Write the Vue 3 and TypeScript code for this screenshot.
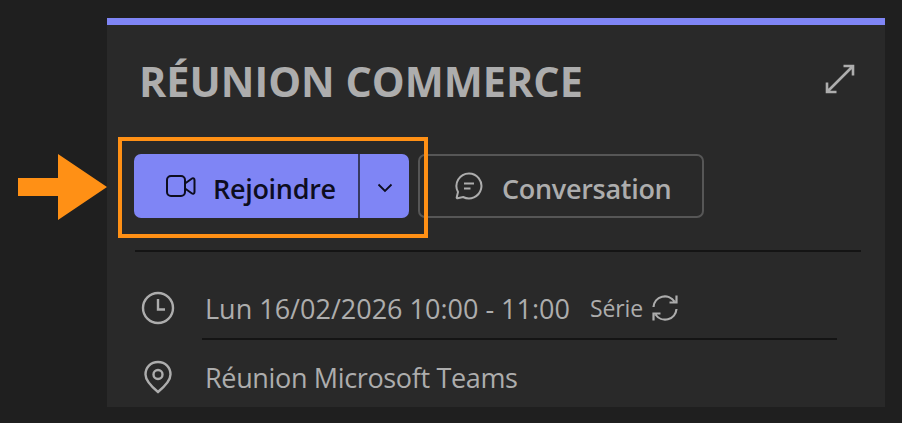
<script setup lang="ts">
const title: string = 'RÉUNION COMMERCE'
</script>

<template>
  <div class="page">
    <section class="card">
      <header class="head">
        <h1 class="title">{{ title }}</h1>
        <svg class="expand" viewBox="0 0 32 32" fill="none" stroke="currentColor" stroke-width="2.6">
          <path d="M3 29 29 3M19.500 3H29V12.500M3 19.500V29H12.500" />
        </svg>
      </header>

      <div class="actions">
        <div class="join">
          <button class="join-main">
            <svg class="cam" viewBox="0 0 30 24" fill="none" stroke="currentColor" stroke-width="2">
              <rect x="1" y="2" width="18" height="20" rx="4" />
              <path d="M19 9.5 26 4.5C27 3.8 28.5 4.5 28.5 6V18C28.5 19.5 27 20.2 26 19.5L19 14.5" />
            </svg>
            <span>Rejoindre</span>
          </button>
          <button class="join-more" aria-label="Options">
            <svg viewBox="0 0 16 10" fill="none" stroke="currentColor" stroke-width="1.8">
              <path d="M1.5 1.5 8 8 14.5 1.5" />
            </svg>
          </button>
        </div>
        <button class="chat">
          <svg class="chat-icon" viewBox="0 0 28 28" fill="none" stroke="currentColor" stroke-width="2">
            <path d="M14 1.5A12.5 12.5 0 1 1 8 25L2.6 26.3C2 26.4 1.6 26 1.7 25.4L3 20A12.5 12.5 0 0 1 14 1.5Z" />
            <path d="M9 11.5H19M9 16.5H15.5" />
          </svg>
          <span>Conversation</span>
        </button>
      </div>

      <hr class="rule rule-main" />

      <div class="row row-date">
        <svg class="row-icon" viewBox="0 0 34 34" fill="none" stroke="currentColor" stroke-width="2.4">
          <circle cx="17" cy="17" r="15" />
          <path d="M17 8V18.5H24" />
        </svg>
        <span class="row-text">Lun 16/02/2026 10:00 - 11:00</span>
        <span class="serie">Série</span>
        <svg class="sync" viewBox="0 0 28 28" fill="none" stroke="currentColor" stroke-width="2.2">
          <path d="M2.5 13A11.5 11.5 0 0 1 23.5 7.5M25.5 1.5V8.5H18.5" />
          <path d="M25.5 15A11.5 11.5 0 0 1 4.5 20.5M2.5 26.5V19.5H9.5" />
        </svg>
      </div>
      <hr class="rule rule-inner" />
      <div class="row row-place">
        <svg class="row-icon pin" viewBox="0 0 30 34" fill="none" stroke="currentColor" stroke-width="2.4">
          <path d="M15 2C22.5 2 27.5 7.5 27.5 14.5C27.5 21 21 27 15 32C9 27 2.500 21 2.500 14.500C2.500 7.500 7.500 2 15 2Z" />
          <circle cx="15" cy="14.500" r="4.500" />
        </svg>
        <span class="row-text place-text">Réunion Microsoft Teams</span>
      </div>
    </section>

    <svg class="arrow" viewBox="0 0 89 66" fill="#ff9015"><path d="M0 24H40V0L89 33 40 66V42H0Z" /></svg>
    <div class="highlight"></div>
  </div>
</template>

<style>
html, body { margin: 0; background: #1f1f1f; }
</style>

<style scoped>
.page {
  position: relative;
  box-sizing: border-box;
  width: 902px;
  height: 423px;
  padding: 18px 17px 16px 107px;
  background: #1f1f1f;
  overflow: hidden;
  font-family: "Open Sans", sans-serif;
}
.card {
  box-sizing: border-box;
  height: 389px;
  padding: 0 24px 0 27px;
  background: #292929;
  border-top: 7px solid #7f85f5;
  overflow: hidden;
}
.head {
  display: flex;
  align-items: center;
  justify-content: space-between;
  height: 114px;
  padding: 0 5px 2px 5px;
  box-sizing: border-box;
}
.title {
  margin: 0;
  font-size: 41.4px;
  font-weight: 700;
  line-height: 48px;
  color: #adadad;
}
.expand { width: 32px; height: 32px; color: #adadad; margin-bottom: 4px; }
.actions { display: flex; gap: 9px; height: 64px; margin-top: 15px; }
.join {
  display: flex;
  width: 275px;
  height: 64px;
  background: #7f85f5;
  border-radius: 7px;
  overflow: hidden;
}
button {
  font-family: inherit;
  border: 0;
  padding: 0;
  background: none;
  display: flex;
  align-items: center;
}
.join-main {
  width: 226px;
  height: 64px;
  gap: 17px;
  padding: 4px 0 0 32px;
  box-sizing: border-box;
  color: #0d0d1f;
  font-size: 27px;
  font-weight: 600;
  letter-spacing: -0.3px;
  border-right: 2px solid #37395f;
}
.cam { width: 30px; height: 24px; margin-bottom: 4px; }
.join-more { flex: 1; justify-content: center; color: #0d0d1f; padding-top: 3px; }
.join-more svg { width: 16px; height: 10px; }
.chat {
  box-sizing: border-box;
  width: 286px;
  height: 64px;
  gap: 19px;
  padding: 4px 0 0 35px;
  border: 2px solid #565656;
  border-radius: 7px;
  color: #adadad;
  font-size: 27px;
  font-weight: 600;
  letter-spacing: -0.3px;
}
.chat-icon { width: 28px; height: 28px; margin-bottom: 4px; }
.rule { margin: 0; border: 0; height: 2px; background: #141414; }
.rule-main { margin-top: 32px; margin-left: 1px; }
.row {
  display: flex;
  align-items: center;
  color: #adadad;
  box-sizing: border-box;
  padding-left: 7px;
}
.row-date { height: 86px; padding-top: 26px; }
.row-icon { width: 34px; height: 34px; margin-right: 30px; flex: none; }
.row-text { font-size: 27px; font-weight: 400; white-space: nowrap; }
.place-text { letter-spacing: -0.35px; }
.serie { font-size: 23px; margin-left: 20px; letter-spacing: -0.1px; }
.sync { width: 28px; height: 28px; margin-left: 8px; }
.rule-inner { margin-left: 68px; margin-right: 24px; }
.row-place { height: 72px; padding-top: 2px; }
.pin { width: 30px; margin-left: 2px; margin-right: 32px; }
.arrow { position: absolute; left: 18px; top: 154px; width: 89px; height: 66px; }
.highlight {
  position: absolute;
  left: 118px;
  top: 137px;
  width: 310px;
  height: 101px;
  box-sizing: border-box;
  border: 4px solid #ff9015;
}
</style>
